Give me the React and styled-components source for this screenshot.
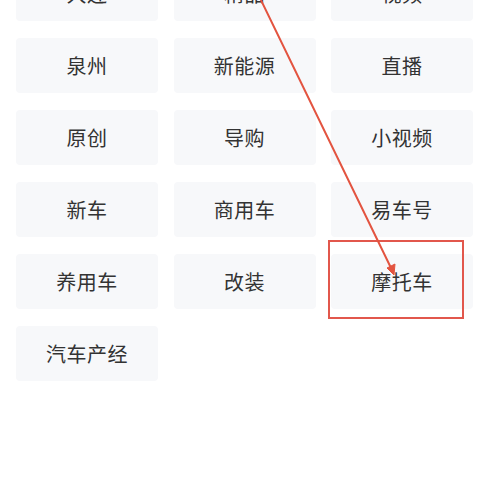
import styled, { createGlobalStyle } from "styled-components";

const channels = [
  "大连", "精品", "视频",
  "泉州", "新能源", "直播",
  "原创", "导购", "小视频",
  "新车", "商用车", "易车号",
  "养用车", "改装", "摩托车",
  "汽车产经",
];

const App = () => {
  return (
    <Page>
      <GlobalStyle />
      <Grid>
        {channels.map((name) => (
          <Tag key={name}>{name}</Tag>
        ))}
      </Grid>

      <Marker />
      <Arrow width="503" height="488" viewBox="0 0 503 488">
        <line x1="259" y1="-4" x2="392" y2="270" />
        <polygon points="394,275 387,268 395,264" />
      </Arrow>
    </Page>
  );
};

export default App;

const GlobalStyle = createGlobalStyle`
  html, body {
    margin: 0;
    background: #fff;
    overflow: hidden;
  }
`;

const Page = styled.div`
  position: relative;
  width: 503px;
  height: 488px;
  overflow: hidden;
  font-family: "Noto Sans CJK SC", "Noto Sans", sans-serif;
`;

const Grid = styled.div`
  display: grid;
  grid-template-columns: repeat(3, 142px);
  grid-auto-rows: 55px;
  column-gap: 15.5px;
  row-gap: 17px;
  padding-left: 16px;
  margin-top: -34px;
`;

const Tag = styled.div`
  display: flex;
  align-items: center;
  justify-content: center;
  background: #f7f8fa;
  border-radius: 4px;
  color: #333;
  font-size: 20px;
  letter-spacing: 0.5px;
`;

const Marker = styled.div`
  position: absolute;
  left: 328px;
  top: 240px;
  width: 136px;
  height: 79px;
  box-sizing: border-box;
  border: 2px solid #e2574c;
`;

const Arrow = styled.svg`
  position: absolute;
  left: 0;
  top: 0;
  pointer-events: none;

  line {
    stroke: #e35440;
    stroke-width: 2;
    stroke-linecap: round;
  }

  polygon {
    fill: #e35440;
    stroke: #e35440;
    stroke-width: 1;
    stroke-linejoin: round;
  }
`;
